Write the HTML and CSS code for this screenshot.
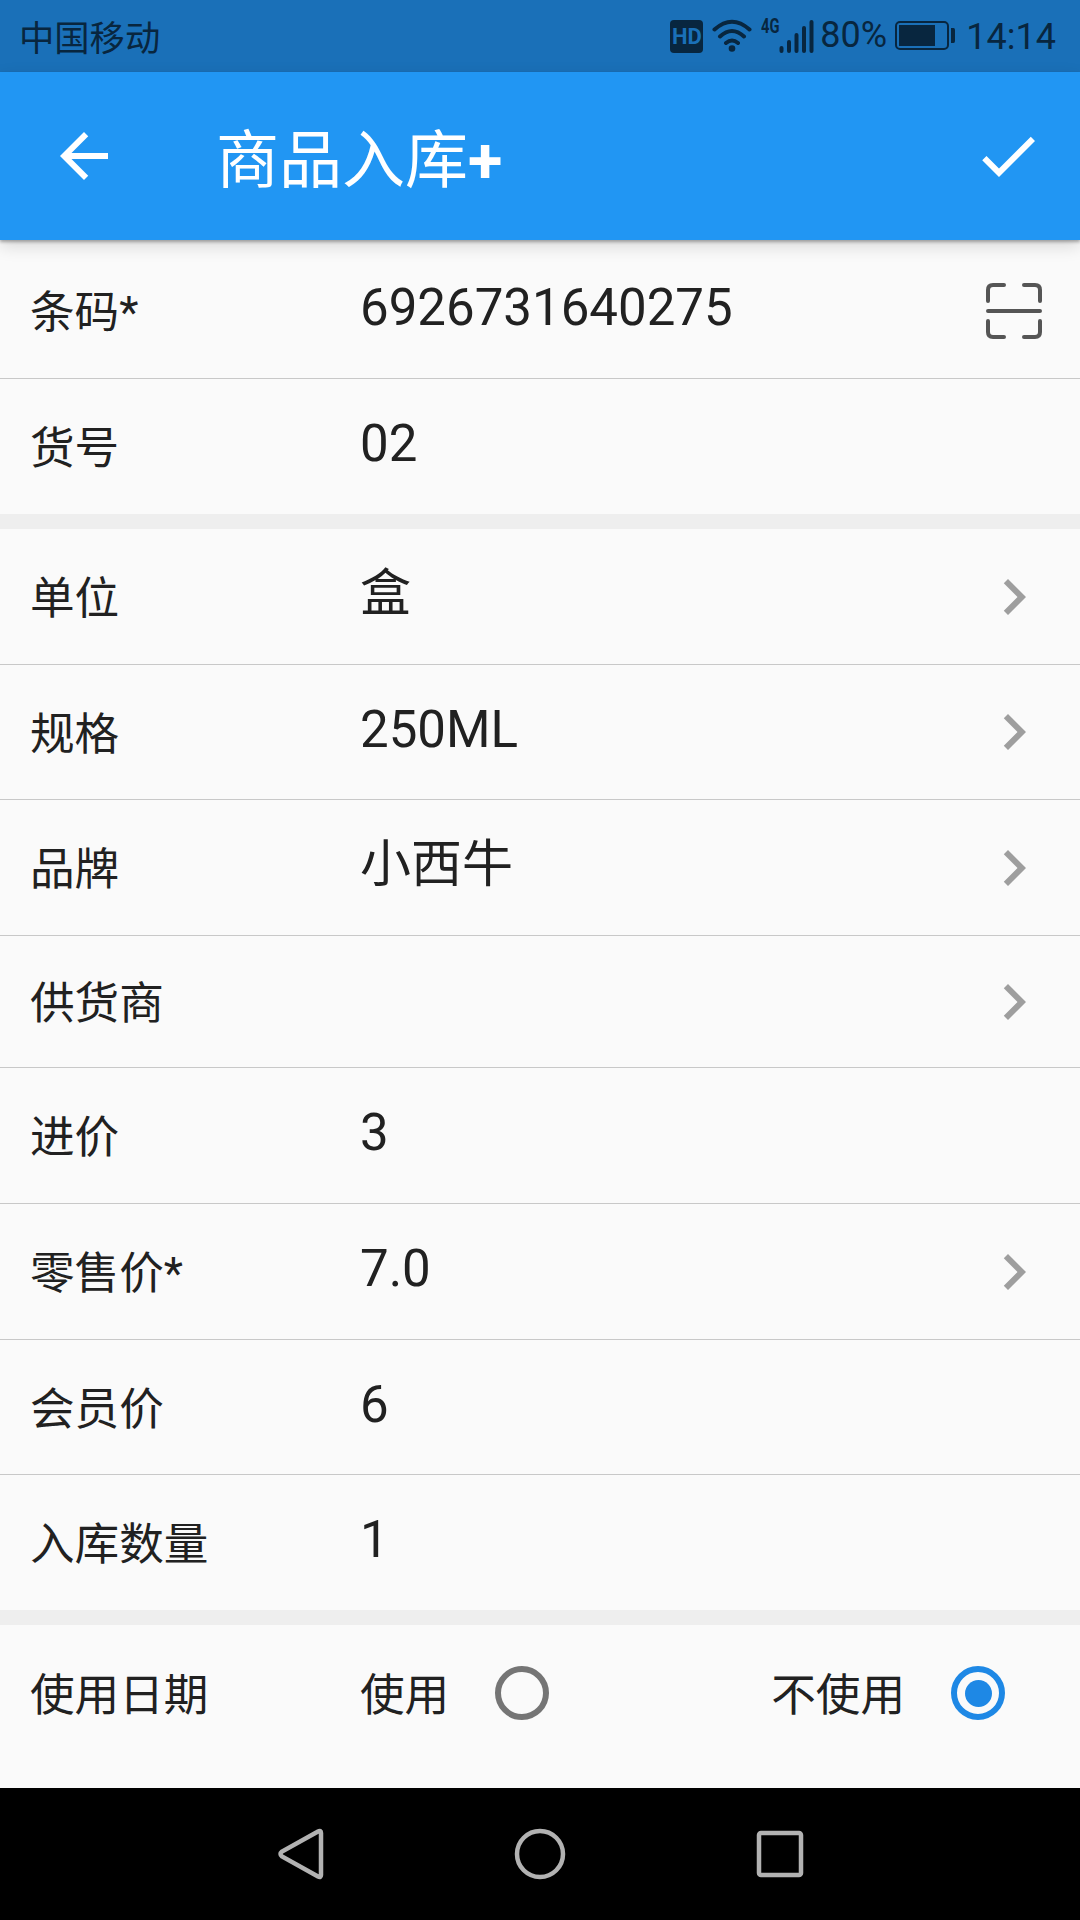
FILE: index.html
```
<!DOCTYPE html>
<html lang="zh-CN">
<head>
  <meta charset="UTF-8">
  <meta name="viewport" content="width=device-width, initial-scale=1.0">
  <title>商品入库</title>
  <link rel="stylesheet" href="styles.css">
</head>
<body>
  <div class="status-bar">
    <span class="carrier">中国移动</span>
    <div class="status-icons">
      <span class="hd">HD</span>
      <svg class="wifi" width="40" height="34" viewBox="0 0 40 34">
        <path d="M2.500 10.500Q20-5 37.500 10.500M8 17.500Q20 6.500 32 17.500M14 24Q20 19 26 24" />
        <circle cx="20" cy="29.500" r="3.300" />
      </svg>
      <span class="network">4G</span>
      <svg class="signal" width="35" height="34" viewBox="0 0 35 34">
        <path d="M2.500 29v3M10 23v9M17.500 16v16M25 9v23M32.500 3v29" />
      </svg>
      <span class="percent">80%</span>
      <svg class="battery" width="61" height="30" viewBox="0 0 61 30">
        <rect x="1" y="1" width="52" height="27" rx="4" />
        <path d="M4 4h36v21H4zM56 7h2.500q1.500 0 1.500 2v11q0 2-1.500 2H56z" />
      </svg>
      <span class="time">14:14</span>
    </div>
  </div>

  <header class="app-bar">
    <svg class="icon" viewBox="0 0 24 24"><path d="M20 11H7.830l5.590-5.590L12 4l-8 8 8 8 1.410-1.410L7.830 13H20v-2z" /></svg>
    <h1>商品入库<b>+</b></h1>
    <svg class="icon" viewBox="0 0 24 24"><path d="M9 16.170L4.830 12l-1.420 1.410L9 19 21 7l-1.410-1.410z" /></svg>
  </header>

  <main class="form">
    <section class="group">
      <div class="row first">
        <label>条码*</label>
        <span class="value">6926731640275</span>
        <svg class="scan" viewBox="0 0 56 56">
          <path d="M18 2H7q-5 0-5 5v11M38 2h11q5 0 5 5v11M2 38v11q0 5 5 5h11M54 38v11q0 5-5 5H38M2 28h52" />
        </svg>
      </div>
      <div class="row">
        <label>货号</label>
        <span class="value">02</span>
      </div>
    </section>

    <section class="group">
      <div class="row tall">
        <label>单位</label>
        <span class="value">盒</span>
        <svg class="icon chevron" viewBox="0 0 24 24"><path d="M10 6L8.590 7.410 13.170 12l-4.580 4.590L10 18l6-6z" /></svg>
      </div>
      <div class="row">
        <label>规格</label>
        <span class="value">250ML</span>
        <svg class="icon chevron" viewBox="0 0 24 24"><path d="M10 6L8.590 7.410 13.170 12l-4.580 4.590L10 18l6-6z" /></svg>
      </div>
      <div class="row tall">
        <label>品牌</label>
        <span class="value">小西牛</span>
        <svg class="icon chevron" viewBox="0 0 24 24"><path d="M10 6L8.590 7.410 13.170 12l-4.580 4.590L10 18l6-6z" /></svg>
      </div>
      <div class="row short">
        <label>供货商</label>
        <span class="value"></span>
        <svg class="icon chevron" viewBox="0 0 24 24"><path d="M10 6L8.590 7.410 13.170 12l-4.580 4.590L10 18l6-6z" /></svg>
      </div>
      <div class="row tall">
        <label>进价</label>
        <span class="value">3</span>
      </div>
      <div class="row tall">
        <label>零售价*</label>
        <span class="value">7.0</span>
        <svg class="icon chevron" viewBox="0 0 24 24"><path d="M10 6L8.590 7.410 13.170 12l-4.580 4.590L10 18l6-6z" /></svg>
      </div>
      <div class="row">
        <label>会员价</label>
        <span class="value">6</span>
      </div>
      <div class="row">
        <label>入库数量</label>
        <span class="value">1</span>
      </div>
    </section>

    <section class="group">
      <div class="row tall">
        <label>使用日期</label>
        <div class="options">
          <div class="option"><span>使用</span><i class="radio"></i></div>
          <div class="option"><span>不使用</span><i class="radio checked"></i></div>
        </div>
      </div>
    </section>
  </main>

  <nav class="nav-bar">
    <svg width="50" height="54" viewBox="0 0 50 54"><path d="M42 4.500Q45 3 45 6v42q0 3-3 1.500L6 29.500q-3-2.500 0-5z" /></svg>
    <svg width="54" height="54" viewBox="0 0 54 54"><circle cx="27" cy="27" r="23" /></svg>
    <svg width="54" height="54" viewBox="0 0 54 54"><rect x="6" y="6" width="42" height="42" rx="2" /></svg>
  </nav>
</body>
</html>
```
FILE: styles.css
```
* {
  box-sizing: border-box;
}
body {
  margin: 0;
  height: 1920px;
  display: flex;
  flex-direction: column;
  overflow: hidden;
  background: #fafafa;
  font-family: Roboto, "Noto Sans CJK SC", sans-serif;
  color: #212121;
}
svg {
  display: block;
  flex: none;
}

/* status bar */
.status-bar {
  height: 72px;
  padding: 0 24px 0 19px;
  display: flex;
  justify-content: space-between;
  align-items: center;
  background: #1a70b8;
  color: #08263f;
}
.carrier {
  font-size: 35.3px;
  font-weight: 400;
  line-height: 68px;
  padding-top: 5px;
}
.status-icons {
  display: flex;
  align-items: center;
}
.hd {
  width: 33px;
  height: 33px;
  border-radius: 4px;
  background: #08263f;
  color: #1a70b8;
  font-size: 22px;
  font-weight: 700;
  line-height: 34px;
  text-align: center;
}
.wifi {
  margin-left: 9px;
  fill: #08263f;
}
.wifi path {
  fill: none;
  stroke: #08263f;
  stroke-width: 4;
  stroke-linecap: round;
}
.network {
  margin: -20px 0 0 9px;
  width: 18px;
  font-size: 21px;
  font-weight: 700;
  line-height: 20px;
  transform: scaleX(0.7);
  transform-origin: left;
}
.signal {
  stroke: #08263f;
  stroke-width: 4;
  stroke-linecap: round;
}
.percent {
  margin: -2px 0 0 6px;
  width: 67px;
  font-size: 36px;
}
.battery {
  margin: 0 0 0 8px;
  fill: #08263f;
}
.battery rect {
  fill: none;
  stroke: #08263f;
  stroke-width: 2;
}
.time {
  margin: 2px 0 0 10px;
  font-size: 36px;
}

/* app bar */
.app-bar {
  position: relative;
  height: 168px;
  padding: 0 36px 0 48px;
  display: flex;
  align-items: center;
  background: #2196f3;
  color: #fff;
  box-shadow: 0 2px 3px rgba(0, 0, 0, 0.3), 0 6px 16px rgba(0, 0, 0, 0.14);
}
.app-bar h1 {
  flex: 1;
  margin: 9px 0 0 96px;
  font-size: 63px;
  font-weight: 400;
  line-height: 84px;
}
.icon {
  width: 72px;
  height: 72px;
  fill: currentColor;
}

/* form rows */
.form {
  flex: 1;
}
.group + .group {
  border-top: 15px solid #eee;
}
.row {
  height: 135px;
  padding: 0 30px;
  display: flex;
  align-items: center;
}
.row.first {
  height: 139px;
  padding-top: 3px;
}
.row.tall {
  height: 136px;
}
.row.short {
  height: 132px;
}
.row:not(:last-child) {
  border-bottom: 1px solid #c8c8c8;
}
.row label {
  width: 330px;
  padding-top: 5px;
  font-size: 44.6px;
  line-height: 64px;
}
.value {
  flex: 1;
  margin-top: -5px;
  font-size: 51px;
  line-height: 70px;
}
.chevron {
  color: #9e9e9e;
}
.scan {
  width: 56px;
  height: 56px;
  margin-right: 8px;
  fill: none;
  stroke: #555;
  stroke-width: 4;
  stroke-linecap: round;
}

/* date option */
.options {
  flex: 1;
  padding-right: 45px;
  display: flex;
  justify-content: space-between;
}
.option {
  display: flex;
  align-items: center;
  gap: 46px;
}
.option span {
  padding-top: 5px;
  font-size: 44.6px;
  line-height: 64px;
}
.radio {
  width: 54px;
  height: 54px;
  display: flex;
  align-items: center;
  justify-content: center;
  border: 6px solid #757575;
  border-radius: 50%;
}
.radio.checked {
  border-color: #1e88e5;
}
.radio.checked::before {
  content: "";
  width: 27px;
  height: 27px;
  border-radius: 50%;
  background: #1e88e5;
}

/* system navigation */
.nav-bar {
  height: 132px;
  padding: 0 273px 0 276px;
  display: flex;
  justify-content: space-between;
  align-items: center;
  background: #000;
}
.nav-bar svg {
  fill: none;
  stroke: #b2b2b2;
  stroke-width: 4.5;
}
```
